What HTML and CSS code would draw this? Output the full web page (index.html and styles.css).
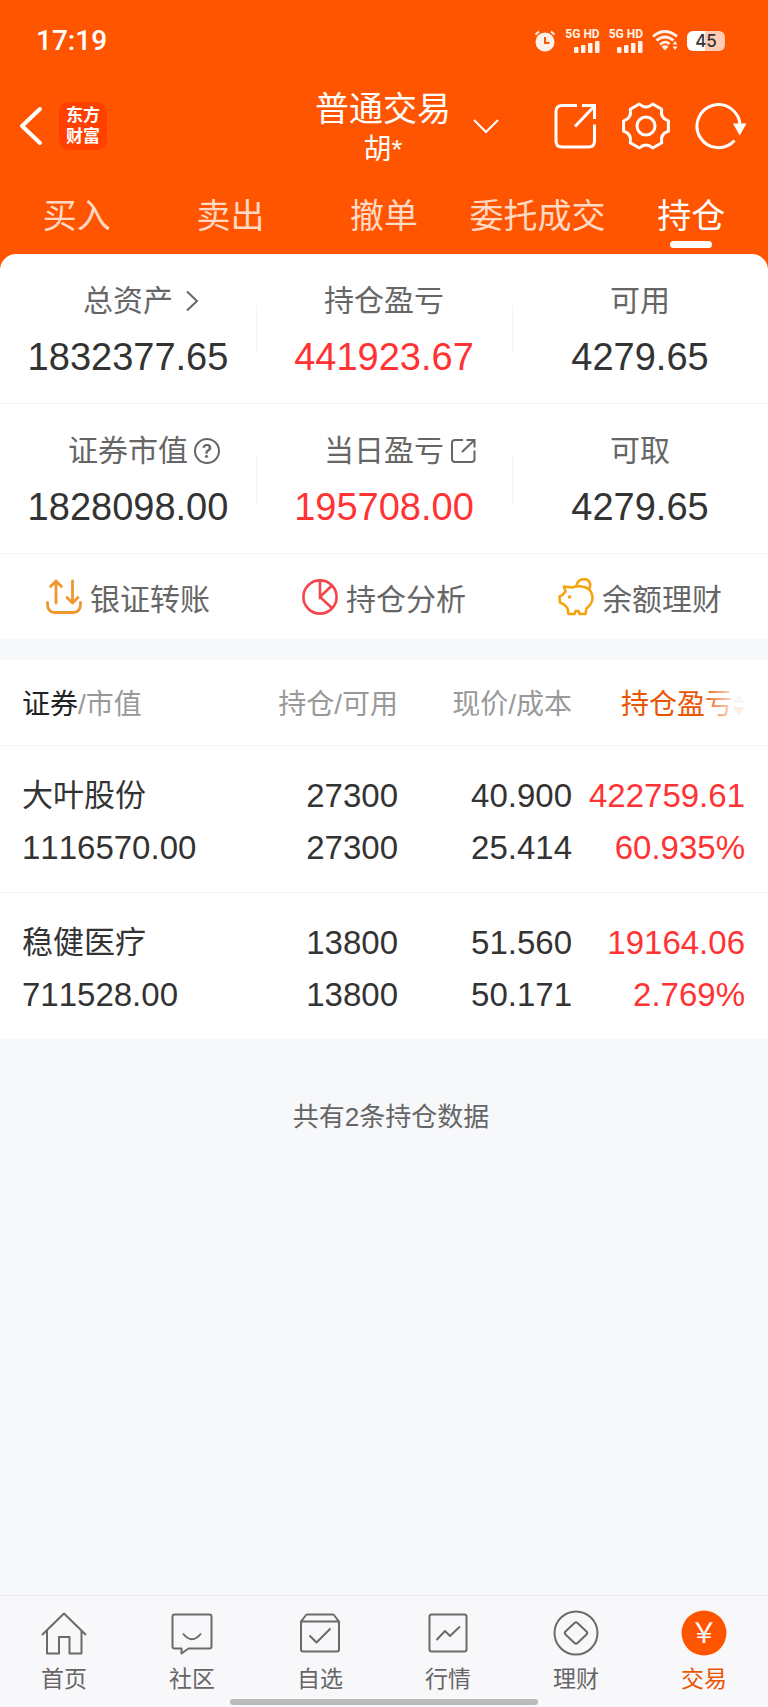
FILE: index.html
```html
<!DOCTYPE html>
<html lang="zh-CN">
<head>
  <meta charset="UTF-8">
  <meta name="viewport" content="width=device-width, initial-scale=1.0">
  <title>普通交易 - 持仓</title>
  <link rel="stylesheet" href="styles.css">
</head>
<body>
  <header class="top">
    <div class="status-bar">
      <span class="time">17:19</span>
      <div class="status-icons">
        <svg width="22" height="22" viewBox="0 0 22 22">
          <circle cx="11" cy="12" r="9.5" fill="#fff2ea"/>
          <path d="M1.5 4.5L5 1.5M20.5 4.5L17 1.5" stroke="#fff2ea" stroke-width="2"/>
          <path d="M11 7v6h4.500" fill="none" stroke="#ff5500" stroke-width="2"/>
        </svg>
        <div class="signal">
          <span>5G HD</span>
          <svg width="26" height="12" viewBox="0 0 26 12" fill="#fff2ea">
            <rect x="0" y="6" width="4.500" height="6" rx="1"/>
            <rect x="7" y="4" width="4.500" height="8" rx="1"/>
            <rect x="14" y="2" width="4.500" height="10" rx="1"/>
            <rect x="21" y="0" width="4.500" height="12" rx="1"/>
          </svg>
        </div>
        <div class="signal">
          <span>5G HD</span>
          <svg width="26" height="12" viewBox="0 0 26 12" fill="#fff2ea">
            <rect x="0" y="6" width="4.500" height="6" rx="1"/>
            <rect x="7" y="4" width="4.500" height="8" rx="1"/>
            <rect x="14" y="2" width="4.500" height="10" rx="1"/>
            <rect x="21" y="0" width="4.500" height="12" rx="1"/>
          </svg>
        </div>
        <svg width="26" height="21" viewBox="0 0 26 21" fill="none" stroke="#fff2ea" stroke-width="2.800">
          <path d="M1 6.500Q13 -3.500 25 6.500M4.500 10.500Q13 3.500 21.500 10.500M8 14.500Q13 10 17.500 14"/>
          <path d="M9.500 16.500Q13 14 16.500 16.500L13 20.500Z" fill="#fff2ea" stroke="none"/>
          <path d="M20.500 14.500L23 11l2.500 3.500zM20.500 16.500L23 20l2.500-3.500z" fill="#fff2ea" stroke="none"/>
        </svg>
        <div class="battery">45</div>
      </div>
    </div>

    <div class="title-bar">
      <div class="title-left">
        <button class="icon-btn" aria-label="返回">
          <svg width="24" height="40" viewBox="0 0 24 40" fill="none" stroke="#fff" stroke-width="4" stroke-linecap="round" stroke-linejoin="round">
            <path d="M21 3L3 20L21 37"/>
          </svg>
        </button>
        <div class="logo">东方<br>财富</div>
      </div>
      <button class="account">
        <span class="account-text">
          <span class="account-type">普通交易</span>
          <span class="account-name">胡*</span>
        </span>
        <svg class="account-arrow" width="26" height="16" viewBox="0 0 26 16" fill="none" stroke="#fff" stroke-width="2">
          <path d="M1 2L13 14L25 2"/>
        </svg>
      </button>
      <div class="title-right">
        <button class="icon-btn" aria-label="分享">
          <svg width="44" height="48" viewBox="0 0 44 48" fill="none" stroke="#fff" stroke-width="3">
            <path d="M24 3.500H9Q3 3.500 3 9.500V39Q3 45 9 45H35.500Q41.500 45 41.500 39V22.500M22 24.500L41 4.500M29 3.500H41.500V17"/>
          </svg>
        </button>
        <button class="icon-btn" aria-label="设置">
          <svg width="48" height="48" viewBox="0 0 48 48" fill="none" stroke="#fff" stroke-width="3" stroke-linejoin="round">
            <path d="M46.400 29.200Q37.900 32 39.700 40.800L30.700 46Q24 40 17.300 46L8.300 40.800Q10.100 32 1.600 29.200V18.800Q10.100 16 8.300 7.200L17.300 2Q24 8 30.700 2L39.700 7.200Q37.900 16 46.400 18.800Z"/>
            <circle cx="24" cy="24" r="9"/>
          </svg>
        </button>
        <button class="icon-btn" aria-label="刷新">
          <svg width="52" height="48" viewBox="0 0 52 48" fill="none" stroke="#fff" stroke-width="3">
            <path d="M39.500 38.500A21.500 21.500 0 1 1 45 24"/>
            <path d="M38 21.500H51.500L44.700 33.500Z" fill="#fff" stroke="none"/>
          </svg>
        </button>
      </div>
    </div>

    <nav class="tabs">
      <a href="#">买入</a>
      <a href="#">卖出</a>
      <a href="#">撤单</a>
      <a href="#">委托成交</a>
      <a href="#" class="active">持仓</a>
    </nav>
  </header>

  <main>
    <section class="summary">
      <div class="summary-row">
        <div class="cell">
          <div class="label">总资产
            <svg class="arrow-icon" width="14" height="22" viewBox="0 0 14 22" fill="none" stroke="#666" stroke-width="2">
              <path d="M2 1.500L12 11L2 20.500"/>
            </svg>
          </div>
          <div class="value">1832377.65</div>
        </div>
        <div class="cell">
          <div class="label">持仓盈亏</div>
          <div class="value red">441923.67</div>
        </div>
        <div class="cell">
          <div class="label">可用</div>
          <div class="value">4279.65</div>
        </div>
      </div>
      <div class="summary-row">
        <div class="cell">
          <div class="label">证券市值
            <svg class="label-icon" width="26" height="26" viewBox="0 0 26 26">
              <circle cx="13" cy="13" r="12" fill="none" stroke="#666" stroke-width="2"/>
              <text x="13" y="20" text-anchor="middle" class="help-mark">?</text>
            </svg>
          </div>
          <div class="value">1828098.00</div>
        </div>
        <div class="cell">
          <div class="label">当日盈亏
            <svg class="label-icon" width="26" height="26" viewBox="0 0 26 26" fill="none" stroke="#666" stroke-width="2">
              <path d="M13 2H5Q2 2 2 5V21Q2 24 5 24H21.500Q24.500 24 24.500 21V12.500M12 14L24 2.500M16.500 2H24.500V9.500"/>
            </svg>
          </div>
          <div class="value red">195708.00</div>
        </div>
        <div class="cell">
          <div class="label">可取</div>
          <div class="value">4279.65</div>
        </div>
      </div>
      <div class="actions">
        <button>
          <svg width="36" height="36" viewBox="0 0 36 36" fill="none" stroke="#f0962e" stroke-width="2.800" stroke-linecap="round" stroke-linejoin="round">
            <path d="M1.500 23.500V25Q1.500 33.500 9 33.500H27Q34.500 33.500 34.500 25V23.500M10 24V2M4.500 7.500L10 2L15.500 7.500M26.500 2V24M21 18.500L26.500 24L32 18.500"/>
          </svg>
          银证转账
        </button>
        <button>
          <svg width="36" height="36" viewBox="0 0 36 36" fill="none" stroke="#f5444a" stroke-width="2.600">
            <circle cx="18" cy="18" r="16.600"/>
            <path d="M18 1V18L30 6.500M18 18L30.500 29.500"/>
          </svg>
          持仓分析
        </button>
        <button>
          <svg width="36" height="38" viewBox="0 0 36 38" fill="none" stroke="#f5a30c" stroke-width="2.600" stroke-linejoin="round">
            <path d="M6 8.500L14 9.500C22 7 30 8.500 33 14C36.500 21 33 27 28.500 30.500L27.500 36H21.500L20.500 33H17.500L16.500 36H10.500L9.500 30.500C7.500 26.500 5 25.500 2 24.500L1.500 18.500C5 17.500 6 15.500 7.500 13.500Z"/>
            <path d="M18.500 7.500C20 0 30 -1 32 5.500C32.500 8 32 9.500 31 11"/>
            <circle cx="11.500" cy="19" r="1.800" fill="#f5a30c" stroke="none"/>
          </svg>
          余额理财
        </button>
      </div>
    </section>

    <table class="holdings">
      <thead>
        <tr>
          <th class="col-name"><span class="current">证券</span>/市值</th>
          <th class="col-amount">持仓/可用</th>
          <th class="col-price">现价/成本</th>
          <th class="col-profit">
            <span class="sort">持仓盈亏
              <svg width="12" height="24" viewBox="0 0 12 24">
                <path d="M0 10L6 2L12 10Z" fill="#aaa"/>
                <path d="M0 14L6 23L12 14Z" fill="#ea5504"/>
              </svg>
            </span>
          </th>
        </tr>
      </thead>
      <tbody>
        <tr>
          <td><span class="stock-name">大叶股份</span><br>1116570.00</td>
          <td>27300<br>27300</td>
          <td>40.900<br>25.414</td>
          <td class="red">422759.61<br>60.935%</td>
        </tr>
        <tr>
          <td><span class="stock-name">稳健医疗</span><br>711528.00</td>
          <td>13800<br>13800</td>
          <td>51.560<br>50.171</td>
          <td class="red">19164.06<br>2.769%</td>
        </tr>
      </tbody>
    </table>

    <p class="total-tip">共有2条持仓数据</p>
  </main>

  <nav class="bottom-nav">
    <a href="#">
      <svg width="48" height="48" viewBox="0 0 48 48">
        <path d="M2 26L24 4.500L46 26M7 21.500V44.500H19V28H29.500V44.500H41.500V21.500"/>
      </svg>
      首页
    </a>
    <a href="#">
      <svg width="48" height="48" viewBox="0 0 48 48">
        <path d="M6.500 5.500H41.500Q43.500 5.500 43.500 7.500V37.500Q43.500 39.500 41.500 39.500H20.500L13.500 44.500V39.500H6.500Q4.500 39.500 4.500 37.500V7.500Q4.500 5.500 6.500 5.500ZM15 24.500Q24 36 33 24.500"/>
      </svg>
      社区
    </a>
    <a href="#">
      <svg width="48" height="48" viewBox="0 0 48 48">
        <path d="M5 12.500L10.500 5.500H37.500L43 12.500V40.500Q43 42.500 41 42.500H7Q5 42.500 5 40.500ZM5 12.500H43M13.500 26.500L20.500 33.500L34.500 19.500"/>
      </svg>
      自选
    </a>
    <a href="#">
      <svg width="48" height="48" viewBox="0 0 48 48">
        <rect x="5.500" y="5.500" width="37" height="37" rx="2"/>
        <path d="M12.500 31L21 22L26 27L36 17.500"/>
      </svg>
      行情
    </a>
    <a href="#">
      <svg width="48" height="48" viewBox="0 0 48 48">
        <circle cx="24" cy="24" r="21.500"/>
        <path d="M22.500 14Q24 12.500 25.500 14L34.500 22.500Q36 24 34.500 25.500L25.500 34Q24 35.500 22.500 34L13.500 25.500Q12 24 13.500 22.500Z"/>
      </svg>
      理财
    </a>
    <a href="#" class="active">
      <svg width="48" height="48" viewBox="0 0 48 48">
        <circle class="coin" cx="24" cy="24" r="22.500"/>
        <text class="yuan" x="24" y="34" text-anchor="middle">￥</text>
      </svg>
      交易
    </a>
    <span class="home-bar"></span>
  </nav>
</body>
</html>
```
FILE: styles.css
```css
* {
  box-sizing: border-box;
}
body {
  margin: 0;
  min-height: 100vh;
  display: flex;
  flex-direction: column;
  background-color: #f7f8fa;
  color: #333;
  font-family: "Liberation Sans", "Noto Sans CJK SC", sans-serif;
  font-kerning: none;
}
a {
  text-decoration: none;
}
svg {
  display: block;
  flex-shrink: 0;
}
button {
  padding: 0;
  border: none;
  background: none;
  font-family: inherit;
  cursor: pointer;
}
.red {
  color: #ff3333;
}

/* header */
.top {
  background-color: #ff5500;
  padding-bottom: 16px;
  color: #fff;
}
.status-bar {
  display: flex;
  justify-content: space-between;
  align-items: center;
  height: 85px;
  padding: 0 43px 4px 36px;
}
.time {
  font-family: Roboto, sans-serif;
  font-size: 28px;
  font-weight: 500;
}
.status-icons {
  display: flex;
  align-items: center;
  gap: 9px;
}
.signal {
  display: flex;
  flex-direction: column;
  align-items: flex-end;
  color: #fff2ea;
  font-family: Roboto, sans-serif;
  font-size: 12px;
  font-weight: bold;
  line-height: 13px;
}
.battery {
  width: 38px;
  height: 20px;
  border-radius: 6px;
  background: linear-gradient(to right, #fff 48%, #ffccb3 48%);
  color: #333;
  font-family: Inter, sans-serif;
  font-size: 17px;
  font-weight: 500;
  line-height: 20px;
  text-align: center;
}
.title-bar {
  display: grid;
  grid-template-columns: 1fr auto 1fr;
  align-items: center;
  padding: 0 21px 0 19px;
}
.title-left, .title-right {
  display: flex;
  align-items: center;
}
.title-left {
  gap: 16px;
}
.title-right {
  justify-content: flex-end;
  gap: 25px;
}
.logo {
  width: 48px;
  height: 48px;
  padding-top: 3px;
  border-radius: 10px;
  background-color: #ff4000;
  font-size: 17px;
  font-weight: bold;
  line-height: 21px;
  text-align: center;
}
.account {
  display: flex;
  align-items: center;
  color: #fff;
}
.account-text {
  display: flex;
  flex-direction: column;
}
.account-type {
  font-size: 34px;
  line-height: 48px;
}
.account-name {
  font-size: 28px;
  line-height: 34px;
}
/* the arrow hangs outside, so the title stays centred */
.account-arrow {
  margin-left: 22px;
  margin-right: -48px;
}
.tabs {
  display: grid;
  grid-template-columns: repeat(5, 1fr);
}
.tabs a {
  display: flex;
  flex-direction: column;
  align-items: center;
  padding: 24px 0 6px;
  color: #ffd9c4;
  font-size: 34px;
  line-height: 50px;
  white-space: nowrap;
}
.tabs a::after {
  content: "";
  width: 42px;
  height: 7px;
  border-radius: 4px;
}
.tabs .active {
  color: #fff;
}
.tabs .active::after {
  background-color: #fff;
}

/* account summary */
.summary {
  margin-top: -16px;
  border-radius: 16px 16px 0 0;
  background-color: #fff;
}
.summary-row {
  display: grid;
  grid-template-columns: repeat(3, 1fr);
  border-bottom: 1px solid #f4f4f5;
}
.cell {
  position: relative;
  padding: 27px 0 22px;
  text-align: center;
}
.cell + .cell::before {
  content: "";
  position: absolute;
  left: 0;
  top: 52px;
  height: 48px;
  border-left: 1px solid #f4f4f5;
}
.label {
  display: flex;
  justify-content: center;
  align-items: center;
  margin-bottom: 12px;
  color: #666;
  font-size: 30px;
  line-height: 40px;
}
.label-icon {
  margin-left: 6px;
  margin-right: -32px;
}
.arrow-icon {
  margin-left: 12px;
  margin-right: -26px;
}
.help-mark {
  fill: #666;
  font-family: Inter, sans-serif;
  font-size: 19px;
  font-weight: 600;
}
.value {
  font-size: 38px;
  line-height: 48px;
}
.actions {
  display: grid;
  grid-template-columns: repeat(3, 1fr);
  height: 85px;
}
.actions button {
  display: flex;
  justify-content: center;
  align-items: center;
  gap: 8px;
  color: #666;
  font-size: 30px;
}

/* holdings table */
.holdings {
  width: 100%;
  margin-top: 21px;
  border-collapse: collapse;
  table-layout: fixed;
  background-color: #fff;
}
.holdings th, .holdings td {
  padding: 23px 0 18px;
  border-bottom: 1px solid #f4f4f5;
  text-align: right;
}
.holdings th {
  padding: 25px 0 20px;
  color: #999;
  font-size: 28px;
  font-weight: normal;
  line-height: 40px;
  white-space: nowrap;
}
.holdings td {
  font-size: 33px;
  line-height: 52px;
}
.holdings th:first-child, .holdings td:first-child {
  padding-left: 22px;
  text-align: left;
}
.holdings th:last-child, .holdings td:last-child {
  padding-right: 23px;
}
.holdings tbody tr:last-child td {
  border-bottom: none;
}
.holdings .current {
  color: #222;
}
.col-amount {
  width: 176px;
}
.col-price {
  width: 174px;
}
.col-profit {
  width: 196px;
}
.holdings .stock-name {
  font-size: 31px;
}
.sort {
  position: relative;
  display: flex;
  justify-content: flex-end;
  align-items: center;
  color: #ea5504;
}
.sort::after {
  content: "";
  position: absolute;
  top: 0;
  right: 0;
  width: 44px;
  height: 100%;
  background: linear-gradient(to right, rgba(255, 255, 255, 0), rgba(255, 255, 255, 0.9) 80%);
}
.total-tip {
  margin: 58px 0;
  padding-left: 14px;
  color: #666;
  font-size: 26px;
  line-height: 40px;
  text-align: center;
}

/* bottom navigation */
.bottom-nav {
  position: relative;
  display: grid;
  grid-template-columns: repeat(6, 1fr);
  margin-top: auto;
  padding: 13px 0;
  border-top: 1px solid #ebedf0;
  background-color: #f8f8fb;
}
.bottom-nav a {
  display: flex;
  flex-direction: column;
  align-items: center;
  gap: 7px;
  color: #666;
  font-size: 23px;
  line-height: 30px;
}
.bottom-nav svg {
  fill: none;
  stroke: #6a6a6a;
  stroke-width: 2;
  stroke-linejoin: round;
}
.bottom-nav .active {
  color: #ea5504;
}
.bottom-nav .coin {
  fill: #ff5500;
  stroke: none;
}
.bottom-nav .yuan {
  fill: #fff;
  stroke: none;
  font-family: "Noto Sans CJK SC", sans-serif;
  font-size: 28px;
}
.home-bar {
  position: absolute;
  left: 30%;
  bottom: 2px;
  width: 40%;
  height: 6px;
  border-radius: 3px;
  background-color: #bbb;
}
```
